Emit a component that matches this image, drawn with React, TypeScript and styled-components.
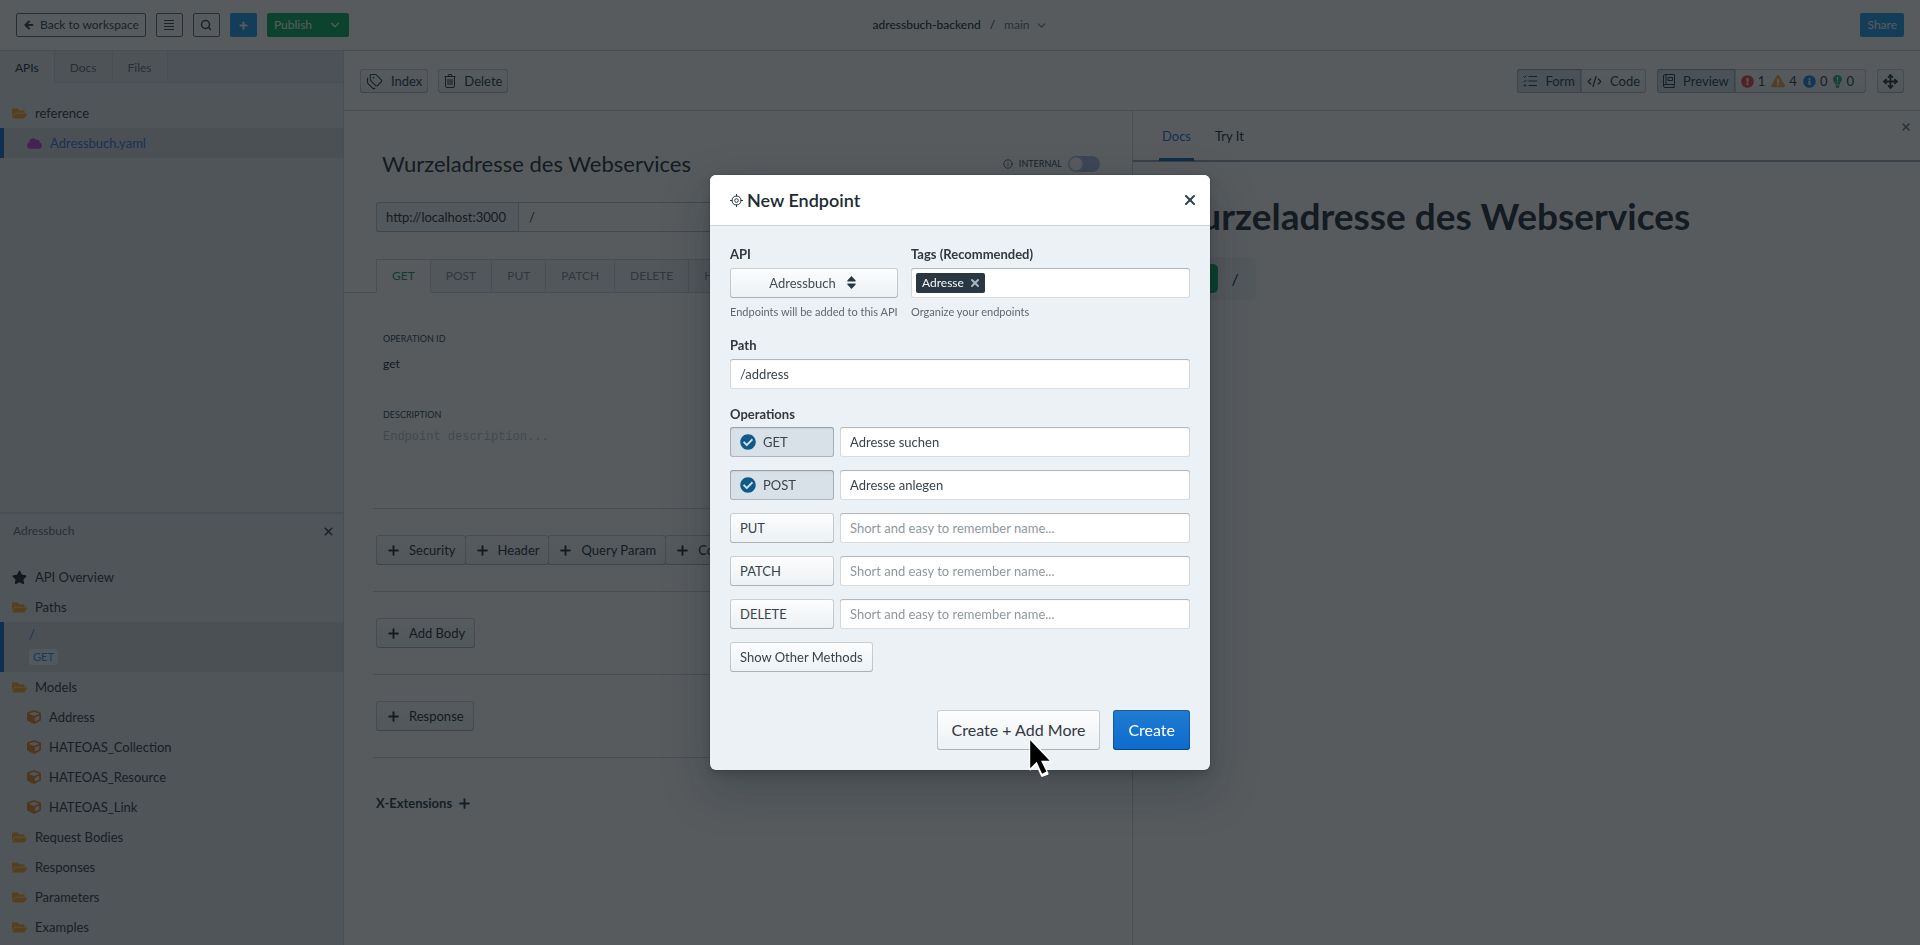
import React, { useState } from 'react';
import styled, { createGlobalStyle, css } from 'styled-components';
import { ArrowLeft, ChevronDown, CodeXml, Info, Move, Plus, Search, Tags, X } from 'lucide-react';
import {
  FaCheckCircle,
  FaCloud,
  FaCube,
  FaExclamationCircle,
  FaExclamationTriangle,
  FaFolderOpen,
  FaInfoCircle,
  FaStar,
} from 'react-icons/fa';

const GlobalStyle = createGlobalStyle`
  *, *::before, *::after { box-sizing: border-box; }
  body {
    margin: 0;
    background: #fff;
    color: #202b33;
    font-family: Lato, "Noto Sans", sans-serif;
    font-size: 13px;
    line-height: 18px;
  }
  button, input, select, textarea { font: inherit; color: inherit; margin: 0; }
  button { cursor: pointer; }
  h1, h2, p, ul { margin: 0; padding: 0; }
  ul { list-style: none; }
  a { color: inherit; text-decoration: none; }
`;

const line = '#cbd3de';
const raised = css`
  border: 0;
  border-radius: 3px;
  background: #f5f8fa linear-gradient(to bottom, rgba(255, 255, 255, 0.8), rgba(255, 255, 255, 0));
  background: linear-gradient(to bottom, #fdfdfe, #ecf1f4);
  box-shadow: inset 0 0 0 1px rgba(16, 22, 26, 0.2), inset 0 -1px 0 rgba(16, 22, 26, 0.1);
`;
const pressed = css`
  background: #d8e1e8;
  box-shadow: inset 0 0 0 1px rgba(16, 22, 26, 0.2), inset 0 1px 2px rgba(16, 22, 26, 0.2);
`;

/* ---------- page frame ---------- */

const Page = styled.div`
  display: flex;
  flex-direction: column;
  min-height: 100vh;
`;
const TopBar = styled.header`
  display: grid;
  grid-template-columns: 1fr auto 1fr;
  align-items: center;
  padding: 13px 16px;
  border-bottom: 1px solid ${line};
  font-size: 12px;
`;
const TopGroup = styled.div<{ $end?: boolean }>`
  display: flex;
  gap: 10px;
  justify-content: ${(p) => (p.$end ? 'flex-end' : 'flex-start')};
`;
const OutlineButton = styled.button`
  display: flex;
  align-items: center;
  justify-content: center;
  gap: 5px;
  height: 24px;
  min-width: 27px;
  padding: 0 6px;
  border: 1px solid #5c6b7a;
  border-radius: 2px;
  background: transparent;
  color: #30404d;
`;
const SolidButton = styled.button<{ $tone: 'blue' | 'green' }>`
  display: flex;
  align-items: center;
  justify-content: center;
  gap: 16px;
  height: 24px;
  min-width: 27px;
  padding: 0 7px;
  border: 0;
  border-radius: 2px;
  background: ${(p) => (p.$tone === 'blue' ? '#1e9bf0' : '#06b05f')};
  color: #fff;
`;
const Crumbs = styled.nav`
  display: flex;
  align-items: center;
  gap: 9px;
`;
const Project = styled.a`
  font-weight: 500;
`;
const Branch = styled.button`
  display: flex;
  align-items: center;
  gap: 5px;
  padding: 0;
  border: 0;
  background: none;
  color: #5c7080;
`;
const Columns = styled.div`
  display: grid;
  grid-template-columns: 344px minmax(0, 1fr);
  flex: 1;
`;

/* ---------- sidebar ---------- */

const Sidebar = styled.aside`
  display: flex;
  flex-direction: column;
  border-right: 1px solid ${line};
  background: #e6eaee;
`;
const SideTabs = styled.div`
  display: flex;
  height: 32px;
`;
const SideTab = styled.button<{ $active?: boolean }>`
  padding: 2px 15px 0;
  border: solid ${line};
  border-width: ${(p) => (p.$active ? '0 1px 0 0' : '0 1px 1px 0')};
  background: ${(p) => (p.$active ? 'transparent' : '#e0e5ea')};
  color: ${(p) => (p.$active ? '#202b33' : '#5f6b75')};
  font-size: 12px;
`;
const SideTabsRest = styled.div`
  flex: 1;
  border-bottom: 1px solid ${line};
  background: #dbe0e7;
`;
const SideSection = styled.nav<{ $grow?: boolean }>`
  flex: ${(p) => (p.$grow ? 1 : 'none')};
  padding: ${(p) => (p.$grow ? '15px 0' : '12px 0 3px')};
`;
const PanelHeader = styled.div`
  display: flex;
  align-items: center;
  justify-content: space-between;
  height: 38px;
  padding: 0 8px 2px 13px;
  border-top: 2px solid ${line};
  color: #5f6b75;
  font-size: 12px;
`;
const IconButton = styled.button`
  display: flex;
  padding: 0;
  border: 0;
  background: none;
  color: #30404d;
`;
const TreeRow = styled.a<{ $nested?: boolean; $active?: boolean }>`
  display: flex;
  align-items: center;
  gap: 8px;
  height: 30px;
  padding-left: ${(p) => (p.$nested ? 23 : 8)}px;
  border-left: 4px solid ${(p) => (p.$active ? '#0f6bd0' : 'transparent')};
  background: ${(p) => (p.$active ? '#d3dade' : 'none')};
  color: ${(p) => (p.$active ? '#1f78e0' : '#293742')};
`;
const PathRow = styled.a`
  display: flex;
  flex-direction: column;
  align-items: flex-start;
  gap: 6px;
  height: 50px;
  padding: 3px 0 0 25px;
  border-left: 4px solid #0f6bd0;
  background: #d3dade;
  color: #1f78e0;
`;
const MethodBadge = styled.span`
  padding: 0 4px;
  border-radius: 3px;
  background: #f0f4f8;
  color: #2196f3;
  font-size: 11px;
  line-height: 16px;
`;

/* ---------- editor ---------- */

const Workspace = styled.div`
  display: flex;
  flex-direction: column;
`;
const Toolbar = styled.div`
  display: flex;
  justify-content: space-between;
  padding: 18px 16px 17px;
  border-bottom: 1px solid ${line};
`;
const ToolGroup = styled.div<{ $gap?: number }>`
  display: flex;
  gap: ${(p) => p.$gap ?? 10}px;
`;
const ToolButton = styled.button<{ $active?: boolean; $join?: 'left' | 'right' }>`
  ${raised}
  ${(p) => p.$active && pressed}
  display: flex;
  align-items: center;
  gap: 8px;
  height: 24px;
  padding: 0 6px;
  color: #293742;
  border-radius: ${(p) => (p.$join === 'left' ? '3px 0 0 3px' : p.$join === 'right' ? '0 3px 3px 0' : '3px')};
`;
const Counts = styled(ToolButton)`
  gap: 6px;
  padding-right: 12px;
`;
const Count = styled.span`
  display: flex;
  align-items: center;
  gap: 4px;
`;
const Split = styled.div`
  display: grid;
  grid-template-columns: minmax(0, 1fr) minmax(0, 1fr);
  flex: 1;
`;
const Form = styled.main`
  padding: 37px 32px 0;
`;
const TitleRow = styled.div`
  display: flex;
  align-items: center;
  justify-content: space-between;
  padding-left: 6px;
`;
const EndpointTitle = styled.h1`
  font-size: 22px;
  line-height: 32px;
  font-weight: 400;
`;
const Internal = styled.label`
  display: flex;
  align-items: center;
  gap: 6px;
  color: #30404d;
  font-size: 9px;
`;
const Switch = styled.input`
  appearance: none;
  width: 32px;
  height: 16px;
  border-radius: 8px;
  background: radial-gradient(circle at 8px 8px, #fff 6px, transparent 7px) #a9bddb;
`;
const UrlRow = styled.div`
  display: flex;
  height: 30px;
  margin-top: 22px;
  border-radius: 3px;
  box-shadow: inset 0 0 0 1px #b4bfc9;
`;
const ServerButton = styled.button`
  ${raised}
  border-radius: 3px 0 0 3px;
  padding: 0 13px 0 10px;
  background: #eff3f6;
`;
const UrlInput = styled.input`
  flex: 1;
  padding: 0 10px;
  border: 0;
  background: none;
`;
const MethodTabs = styled.div`
  display: flex;
  margin: 27px -32px 0;
  &::before, &::after {
    content: '';
    width: 32px;
    border-bottom: 1px solid ${line};
  }
  &::after { flex: 1; }
`;
const MethodTab = styled.button<{ $active?: boolean }>`
  height: 34px;
  padding: 0 15px;
  border: 1px solid ${line};
  border-left-width: ${(p) => (p.$active ? 1 : 0)}px;
  border-bottom-color: ${(p) => (p.$active ? 'transparent' : line)};
  background: ${(p) => (p.$active ? 'none' : '#edf1f5')};
  color: ${(p) => (p.$active ? '#0f9960' : '#7a8791')};
  font-size: 12px;
`;
const Field = styled.label`
  display: flex;
  flex-direction: column;
  gap: 4px;
  padding-left: 7px;
  font-size: 9px;
  color: #30404d;
`;
const OperationFields = styled.div`
  display: flex;
  flex-direction: column;
  gap: 32px;
  padding-top: 37px;
`;
const PlainInput = styled.input`
  height: 22px;
  padding: 0;
  border: 0;
  background: none;
  color: #182026;
  font-size: 12px;
`;
const Description = styled.textarea`
  height: 80px;
  padding: 0;
  border: 0;
  resize: none;
  background: none;
  font: 12px/18px "Liberation Mono", monospace;
  &::placeholder { color: #b8c2ca; opacity: 1; }
`;
const Section = styled.section`
  display: flex;
  margin: 0 -3px;
  padding: 26px 3px;
  border-top: 1px solid #cdd4dc;
`;
const AddButton = styled.button<{ $attached?: boolean }>`
  ${raised}
  display: flex;
  align-items: center;
  gap: 8px;
  height: 30px;
  padding: 0 10px;
  margin-left: ${(p) => (p.$attached ? -1 : 0)}px;
  white-space: nowrap;
`;
const Extensions = styled.button`
  display: flex;
  align-items: center;
  gap: 5px;
  margin-top: 10px;
  padding: 0;
  border: 0;
  background: none;
  color: #293742;
  font-weight: 700;
`;

/* ---------- docs preview ---------- */

const Preview = styled.section`
  border-left: 1px solid ${line};
`;
const PreviewTabs = styled.div`
  display: flex;
  align-items: flex-end;
  gap: 18px;
  height: 51px;
  padding: 0 8px 0 26px;
  border-bottom: 2px solid #9aa5b1;
`;
const PreviewTab = styled.button<{ $active?: boolean }>`
  height: 48px;
  margin-bottom: -1px;
  padding: 0 3px;
  border: 0;
  border-bottom: 3px solid ${(p) => (p.$active ? '#106ba3' : 'transparent')};
  background: none;
  color: ${(p) => (p.$active ? '#1a6fc4' : '#202b33')};
`;
const ClosePreview = styled(IconButton)`
  align-self: flex-start;
  margin: 10px 0 0 auto;
  color: #5c7080;
`;
const Article = styled.article`
  padding: 31px 30px;
`;
const ArticleTitle = styled.h2`
  font-size: 37px;
  line-height: 46px;
  font-weight: 700;
  white-space: nowrap;
`;
const Request = styled.div`
  display: inline-flex;
  align-items: center;
  gap: 13px;
  margin-top: 18px;
  padding: 7px 17px 7px 9px;
  border-radius: 5px;
  background: #f0f3f6;
  font-size: 16px;
`;
const RequestMethod = styled.span`
  padding: 0 8px;
  border-radius: 5px;
  background: #06a65a;
  color: #fff;
  line-height: 29px;
`;

/* ---------- dialog ---------- */

const Backdrop = styled.div`
  position: fixed;
  inset: 0;
  display: flex;
  align-items: center;
  justify-content: center;
  background: rgba(16, 22, 26, 0.7);
`;
const Dialog = styled.form`
  width: 500px;
  border-radius: 6px;
  background: #ebf1f5;
  box-shadow: 0 0 0 1px rgba(16, 22, 26, 0.1), 0 4px 8px rgba(16, 22, 26, 0.2),
    0 18px 46px 6px rgba(16, 22, 26, 0.2);
`;
const DialogHeader = styled.header`
  display: flex;
  align-items: center;
  gap: 4px;
  height: 51px;
  padding: 0 12px 0 20px;
  border-bottom: 1px solid #cdd2d6;
  border-radius: 6px 6px 0 0;
  background: #fff;
`;
const DialogTitle = styled.h2`
  flex: 1;
  font-size: 18px;
  line-height: 24px;
  font-weight: 600;
`;
const DialogBody = styled.div`
  display: flex;
  flex-direction: column;
  gap: 17px;
  padding: 20px 20px 0;
`;
const FieldPair = styled.div`
  display: grid;
  grid-template-columns: 168px 1fr;
  gap: 13px;
`;
const FormLabel = styled.label`
  display: block;
  margin-bottom: 5px;
  color: #30383e;
  font-size: 13px;
  line-height: 17px;
  font-weight: 700;
`;
const Help = styled.p`
  margin-top: 6px;
  color: #5f6970;
  font-size: 11px;
  line-height: 16px;
  white-space: nowrap;
`;
const SelectBox = styled.div`
  position: relative;
`;
const Select = styled.select`
  ${raised}
  appearance: none;
  width: 100%;
  height: 30px;
  padding: 0 33px 0 10px;
  text-align-last: center;
  color: #414b53;
`;
const SelectCaret = styled.svg`
  position: absolute;
  top: 8px;
  right: 42px;
  pointer-events: none;
`;
const fieldBox = css`
  height: 30px;
  border: 0;
  border-radius: 3px;
  background: #fff;
  box-shadow: inset 0 0 0 1px rgba(16, 22, 26, 0.15), inset 0 1px 1px rgba(16, 22, 26, 0.2);
`;
const TextInput = styled.input`
  ${fieldBox}
  width: 100%;
  min-width: 0;
  padding: 0 10px;
  color: #3a434a;
  &::placeholder { color: #90979c; opacity: 1; }
`;
const TagBox = styled.div`
  ${fieldBox}
  display: flex;
  align-items: center;
  padding: 5px;
`;
const Tag = styled.span`
  display: flex;
  align-items: center;
  gap: 5px;
  height: 20px;
  padding: 0 4px 0 6px;
  border-radius: 2px;
  background: #293742;
  color: #f5f8fa;
  font-size: 12px;
`;
const TagRemove = styled(IconButton)`
  color: #a7b6c2;
`;
const TagInput = styled.input`
  flex: 1;
  min-width: 0;
  border: 0;
  outline: 0;
  background: none;
`;
const Operations = styled.fieldset`
  display: flex;
  flex-direction: column;
  align-items: flex-start;
  gap: 13px;
  min-width: 0;
  margin: 0;
  padding: 0;
  border: 0;
`;
const Legend = styled(FormLabel).attrs({ as: 'legend' })`
  margin-bottom: 4px;
  padding: 0;
`;
const OperationRow = styled.div`
  display: grid;
  grid-template-columns: 104px 1fr;
  gap: 6px;
  width: 100%;
`;
const DialogButton = styled.button<{ $on?: boolean }>`
  ${raised}
  ${(p) => p.$on && pressed}
  display: flex;
  align-items: center;
  gap: 7px;
  height: 30px;
  padding: 0 10px;
  color: #3a434a;
`;
const DialogFooter = styled.footer`
  display: flex;
  justify-content: flex-end;
  gap: 13px;
  padding: 38px 20px 20px;
`;
const Anchor = styled.div`
  position: relative;
`;
const LargeButton = styled.button<{ $primary?: boolean }>`
  ${raised}
  height: 40px;
  padding: 0 15px;
  color: #30383e;
  font-size: 16px;
  ${(p) =>
    p.$primary &&
    css`
      background: linear-gradient(to bottom, #217bd1, #0c6bce);
      box-shadow: inset 0 0 0 1px rgba(16, 22, 26, 0.3), inset 0 -1px 0 rgba(16, 22, 26, 0.2);
      color: #fff;
    `}
`;
const Pointer = styled.svg`
  position: absolute;
  top: 27px;
  left: 91px;
  pointer-events: none;
`;

/* ---------- drawn icons ---------- */

const LinesIcon = () => (
  <svg width="10" height="10" viewBox="0 0 10 10" stroke="currentColor" aria-hidden>
    <path d="M0 .5h10M0 3.500h10M0 6.500h10M0 9.500h10" />
  </svg>
);
const TrashIcon = () => (
  <svg width="12" height="14" viewBox="0 0 12 14" fill="none" stroke="currentColor" aria-hidden>
    <path d="M.5 2.500h11M4 2.500l.7-2h2.600l.7 2M1.500 2.500v9.500q0 1.500 1.500 1.500h6q1.500 0 1.500-1.500V2.500M4 5v6M6 5v6M8 5v6" />
  </svg>
);
const ChecklistIcon = () => (
  <svg width="14" height="12" viewBox="0 0 14 12" fill="none" stroke="currentColor" aria-hidden>
    <path d="M5.500 1.500H14M5.500 6H14M5.500 10.500H14M.5 1.500l1 1 2-2M.5 6l1 1 2-2" />
    <circle cx="2" cy="10.500" r=".8" />
  </svg>
);
const BookIcon = () => (
  <svg width="12" height="14" viewBox="0 0 12 14" fill="none" stroke="currentColor" aria-hidden>
    <path d="M11.500 10.500V.5H2Q.5.5.5 2v10q0 1.500 1.500 1.500h9.500M11.500 10.500H2q-1.500 0-1.500 1.500M11 10.500v3M3 .5v10M5 3.500h4.500v3H5z" />
  </svg>
);
const HintIcon = () => (
  <svg width="9" height="13" viewBox="0 0 9 13" aria-hidden>
    <path fill="#15b371" d="M4.500 0A4.500 4.500 0 0 0 0 4.500C0 6.500 2 7.500 2.300 9.500h4.400C7 7.500 9 6.500 9 4.500A4.500 4.500 0 0 0 4.500 0zM2.500 10.300h4v1L5.500 13h-2l-1-1.700z" />
    <path fill="#fff" d="M3.800 1.800h1.400L5 5.600H4zM3.900 6.500h1.200v1.200H3.900z" />
  </svg>
);
const TargetIcon = () => (
  <svg width="13" height="13" viewBox="0 0 13 13" fill="none" stroke="#293742" aria-hidden>
    <circle cx="6.500" cy="6.500" r="4.500" />
    <circle cx="6.500" cy="6.500" r="1.800" />
    <path d="M6.500 0v2.500M6.500 10.500V13M0 6.500h2.500M10.500 6.500H13" />
  </svg>
);

const Folder = () => <FaFolderOpen size={15} color="#f5a623" />;
const Cube = () => <FaCube size={14} color="#e6841c" />;
const AddIcon = () => <Plus size={15} strokeWidth={3} />;

const models = ['Address', 'HATEOAS_Collection', 'HATEOAS_Resource', 'HATEOAS_Link'];
const componentGroups = ['Request Bodies', 'Responses', 'Parameters', 'Examples'];
const methods = ['GET', 'POST', 'PUT', 'PATCH', 'DELETE', 'HEAD'];

export default function App() {
  const [operations, setOperations] = useState([
    { method: 'GET', name: 'Adresse suchen', on: true },
    { method: 'POST', name: 'Adresse anlegen', on: true },
    { method: 'PUT', name: '', on: false },
    { method: 'PATCH', name: '', on: false },
    { method: 'DELETE', name: '', on: false },
  ]);
  const update = (index: number, change: { name?: string; on?: boolean }) =>
    setOperations((all) => all.map((op, i) => (i === index ? { ...op, ...change } : op)));

  return (
    <>
      <GlobalStyle />
      <Page>
        <TopBar>
          <TopGroup>
            <OutlineButton><ArrowLeft size={12} strokeWidth={4} />Back to workspace</OutlineButton>
            <OutlineButton aria-label="Menu"><LinesIcon /></OutlineButton>
            <OutlineButton aria-label="Search"><Search size={12} strokeWidth={3} /></OutlineButton>
            <SolidButton $tone="blue" aria-label="Add"><Plus size={11} strokeWidth={4} /></SolidButton>
            <SolidButton $tone="green">Publish<ChevronDown size={14} strokeWidth={2} /></SolidButton>
          </TopGroup>
          <Crumbs>
            <Project href="#project">adressbuch-backend</Project>
            <span>/</span>
            <Branch>main<ChevronDown size={13} strokeWidth={2} /></Branch>
          </Crumbs>
          <TopGroup $end><SolidButton $tone="blue">Share</SolidButton></TopGroup>
        </TopBar>

        <Columns>
          <Sidebar>
            <SideTabs>
              <SideTab $active>APIs</SideTab>
              <SideTab>Docs</SideTab>
              <SideTab>Files</SideTab>
              <SideTabsRest />
            </SideTabs>
            <SideSection $grow>
              <TreeRow href="#reference"><Folder />reference</TreeRow>
              <TreeRow href="#api" $nested $active><FaCloud size={15} color="#c13fdc" />Adressbuch.yaml</TreeRow>
            </SideSection>
            <PanelHeader>
              Adressbuch
              <IconButton aria-label="Close panel"><X size={13} strokeWidth={3} /></IconButton>
            </PanelHeader>
            <SideSection>
              <TreeRow href="#overview"><FaStar size={15} color="#182026" />API Overview</TreeRow>
              <TreeRow href="#paths"><Folder />Paths</TreeRow>
              <PathRow href="#root">
                <span>/</span>
                <MethodBadge>GET</MethodBadge>
              </PathRow>
              <TreeRow href="#models"><Folder />Models</TreeRow>
              {models.map((name) => (
                <TreeRow key={name} href={'#' + name} $nested><Cube />{name}</TreeRow>
              ))}
              {componentGroups.map((name) => (
                <TreeRow key={name} href={'#' + name}><Folder />{name}</TreeRow>
              ))}
            </SideSection>
          </Sidebar>

          <Workspace>
            <Toolbar>
              <ToolGroup>
                <ToolButton><Tags size={17} strokeWidth={1.5} />Index</ToolButton>
                <ToolButton><TrashIcon />Delete</ToolButton>
              </ToolGroup>
              <ToolGroup $gap={11}>
                <ToolGroup $gap={0}>
                  <ToolButton $active $join="left"><ChecklistIcon />Form</ToolButton>
                  <ToolButton $join="right"><CodeXml size={15} strokeWidth={2} />Code</ToolButton>
                </ToolGroup>
                <ToolGroup $gap={0}>
                  <ToolButton $active $join="left"><BookIcon />Preview</ToolButton>
                  <Counts $join="right">
                    <Count><FaExclamationCircle size={13} color="#eb4444" />1</Count>
                    <Count><FaExclamationTriangle size={14} color="#f29d49" />4</Count>
                    <Count><FaInfoCircle size={13} color="#2184d8" />0</Count>
                    <Count><HintIcon />0</Count>
                  </Counts>
                </ToolGroup>
                <ToolButton aria-label="Full screen"><Move size={15} strokeWidth={3} /></ToolButton>
              </ToolGroup>
            </Toolbar>

            <Split>
              <Form>
                <TitleRow>
                  <EndpointTitle>Wurzeladresse des Webservices</EndpointTitle>
                  <Internal><Info size={10} />INTERNAL<Switch type="checkbox" role="switch" /></Internal>
                </TitleRow>
                <UrlRow>
                  <ServerButton>http://localhost:3000</ServerButton>
                  <UrlInput aria-label="Path" defaultValue="/" />
                </UrlRow>
                <MethodTabs>
                  {methods.map((m, i) => <MethodTab key={m} $active={i === 0}>{m}</MethodTab>)}
                </MethodTabs>
                <OperationFields>
                  <Field>OPERATION ID<PlainInput defaultValue="get" /></Field>
                  <Field>DESCRIPTION<Description placeholder="Endpoint description..." /></Field>
                </OperationFields>
                <Section>
                  <AddButton><AddIcon />Security</AddButton>
                  <AddButton $attached><AddIcon />Header</AddButton>
                  <AddButton $attached><AddIcon />Query Param</AddButton>
                  <AddButton $attached><AddIcon />Cookie</AddButton>
                </Section>
                <Section><AddButton><AddIcon />Add Body</AddButton></Section>
                <Section><AddButton><AddIcon />Response</AddButton></Section>
                <Section><Extensions>X-Extensions<AddIcon /></Extensions></Section>
              </Form>

              <Preview>
                <PreviewTabs>
                  <PreviewTab $active>Docs</PreviewTab>
                  <PreviewTab>Try It</PreviewTab>
                  <ClosePreview aria-label="Close preview"><X size={12} strokeWidth={3} /></ClosePreview>
                </PreviewTabs>
                <Article>
                  <ArticleTitle>Wurzeladresse des Webservices</ArticleTitle>
                  <Request><RequestMethod>GET</RequestMethod>/</Request>
                </Article>
              </Preview>
            </Split>
          </Workspace>
        </Columns>
      </Page>

      <Backdrop>
        <Dialog role="dialog" aria-labelledby="dialog-title" onSubmit={(e) => e.preventDefault()}>
          <DialogHeader>
            <TargetIcon />
            <DialogTitle id="dialog-title">New Endpoint</DialogTitle>
            <IconButton type="button" aria-label="Close"><X size={16} strokeWidth={3} /></IconButton>
          </DialogHeader>
          <DialogBody>
            <FieldPair>
              <div>
                <FormLabel htmlFor="api">API</FormLabel>
                <SelectBox>
                  <Select id="api"><option>Adressbuch</option></Select>
                  <SelectCaret width="9" height="13" viewBox="0 0 9 13" fill="#293742" aria-hidden>
                    <path d="M4.500 0 8.700 4.500q.3 1-.7 1H1q-1 0-.7-1zM4.500 13 8.700 8.500q.3-1-.7-1H1q-1 0-.7 1z" />
                  </SelectCaret>
                </SelectBox>
                <Help>Endpoints will be added to this API</Help>
              </div>
              <div>
                <FormLabel htmlFor="tags">Tags (Recommended)</FormLabel>
                <TagBox>
                  <Tag>Adresse<TagRemove type="button" aria-label="Remove tag"><X size={12} strokeWidth={4} /></TagRemove></Tag>
                  <TagInput id="tags" />
                </TagBox>
                <Help>Organize your endpoints</Help>
              </div>
            </FieldPair>
            <div>
              <FormLabel htmlFor="path">Path</FormLabel>
              <TextInput id="path" defaultValue="/address" />
            </div>
            <Operations>
              <Legend>Operations</Legend>
              {operations.map((op, i) => (
                <OperationRow key={op.method}>
                  <DialogButton type="button" $on={op.on} aria-pressed={op.on} onClick={() => update(i, { on: !op.on })}>
                    {op.on && <FaCheckCircle size={16} color="#0e5a8a" />}
                    {op.method}
                  </DialogButton>
                  <TextInput
                    aria-label={op.method + ' name'}
                    placeholder="Short and easy to remember name..."
                    value={op.name}
                    onChange={(e) => update(i, { name: e.target.value })}
                  />
                </OperationRow>
              ))}
              <DialogButton type="button">Show Other Methods</DialogButton>
            </Operations>
          </DialogBody>
          <DialogFooter>
            <Anchor>
              <LargeButton type="button">Create + Add More</LargeButton>
              <Pointer width="26" height="41" viewBox="0 0 24 38" aria-hidden>
                <path d="M2 2v28l6-5 5 11 5-2-5-11h8z" fill="#fff" stroke="#fff" strokeWidth="2" strokeLinejoin="round" />
                <path d="M2 3v26l6-6 5 11 4-2-5-10h8z" fill="#000" />
              </Pointer>
            </Anchor>
            <LargeButton $primary type="submit">Create</LargeButton>
          </DialogFooter>
        </Dialog>
      </Backdrop>
    </>
  );
}
